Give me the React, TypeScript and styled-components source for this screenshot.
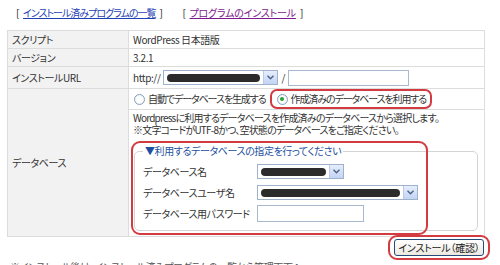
import styled, { createGlobalStyle } from "styled-components";

const GlobalStyle = createGlobalStyle`
  html, body {
    margin: 0;
    padding: 0;
    background: #ffffff;
    overflow: hidden;
  }
  body {
    font-family: "Noto Sans CJK JP", "Liberation Sans", sans-serif;
    font-size: 10px;
    line-height: 12px;
    letter-spacing: -0.4px;
    color: #333333;
    font-feature-settings: "palt";
    white-space: nowrap;
  }
`;

const Page = styled.div`
  width: 500px;
  height: 265px;
  padding-left: 7px;
  box-sizing: border-box;
`;

const TopLinks = styled.div`
  height: 30px;
  padding: 7px 0 0 9px;
  box-sizing: border-box;
  display: flex;
  gap: 20px;
`;

const Bracketed = styled.span`
  color: #222;
`;

const NavLink = styled.a<{ $visited?: boolean }>`
  color: ${(p) => (p.$visited ? "#7a1a8c" : "#1f3fb5")};
  text-decoration: underline;
  letter-spacing: ${(p) => (p.$visited ? "-0.2px" : "-1px")};
  margin: 0 4px;
`;

const Table = styled.table`
  width: 478px;
  border-collapse: collapse;
  border: 1px solid #dcdcdc;
`;

const LabelCell = styled.td`
  width: 116px;
  background: #f2f2f2;
  border: 1px solid #dcdcdc;
  padding: 0 0 0 4px;
  color: #333;
`;

const ValueCell = styled.td<{ $h?: number }>`
  height: ${(p) => p.$h ?? 17}px;
  border: 1px solid #dcdcdc;
  padding: 0 0 0 4px;
  color: #333;
  vertical-align: middle;
`;

const Line = styled.div`
  display: flex;
  align-items: center;
  gap: 3px;
`;

const FakeSelect = styled.div<{ $w: number }>`
  width: ${(p) => p.$w}px;
  height: 13px;
  border: 1px solid #9fb2cc;
  background: #fff;
  display: flex;
  align-items: center;
  padding-left: 3px;
  box-sizing: content-box;
`;

const Blob = styled.span`
  flex: 1;
  height: 8px;
  border-radius: 5px;
  background: #2b2b2b;
  margin-right: 3px;
`;

const ArrowBox = styled.span`
  width: 13px;
  height: 13px;
  background: linear-gradient(#e6eefc, #c2d3f4);
  border-left: 1px solid #b9c9e6;
  display: flex;
  align-items: center;
  justify-content: center;
`;

const TextBox = styled.span<{ $w: number; $h: number }>`
  display: inline-block;
  width: ${(p) => p.$w}px;
  height: ${(p) => p.$h}px;
  border: 1px solid #a9b8cc;
  background: #fff;
`;

const RadioGroup = styled.div`
  display: flex;
  align-items: center;
  height: 20px;
  margin-left: -1px;
  letter-spacing: -1.1px;
`;

const RadioItem = styled.label`
  display: flex;
  align-items: center;
  gap: 3px;
  padding: 0 2px;
`;

const Highlight = styled.span`
  display: inline-flex;
  align-items: center;
  border: 2px solid #d23b40;
  border-radius: 7px;
  height: 16px;
  padding: 0 2px 0 3px;
  margin-left: 2px;
`;

const Radio = styled.span<{ $checked?: boolean }>`
  width: 9px;
  height: 9px;
  border-radius: 50%;
  border: 1px solid #8aa0bd;
  background: radial-gradient(circle, #ffffff 40%, #e4e8ee 100%);
  display: inline-flex;
  align-items: center;
  justify-content: center;
  &::after {
    content: "";
    width: 4px;
    height: 4px;
    border-radius: 50%;
    background: ${(p) => (p.$checked ? "#2aa036" : "transparent")};
  }
`;

const Desc = styled.div`
  padding-top: 2px;
  line-height: 12px;
  letter-spacing: -0.8px;
  color: #333;
`;

const FieldWrap = styled.div`
  position: relative;
  margin: 9px 6px 5px 1px;
`;

const Fieldset = styled.fieldset`
  margin: 0;
  border: 1px solid #d4d4d4;
  border-radius: 5px;
  padding: 4px 0 6px 8px;
`;

const Legend = styled.legend`
  color: #1d4f9e;
  padding: 0 2px;
  margin-left: 0;
`;

const FieldRow = styled.div`
  display: grid;
  grid-template-columns: 114px auto;
  align-items: center;
  height: 21px;
`;

const RedFrame = styled.div`
  position: absolute;
  left: -3px;
  top: -4px;
  width: 293px;
  bottom: -4px;
  border: 2px solid #d23b40;
  border-radius: 9px;
  pointer-events: none;
`;

const ButtonRow = styled.div`
  width: 483px;
  display: flex;
  justify-content: flex-end;
  margin-top: -2px;
`;

const ButtonFrame = styled.span`
  border: 2px solid #d23b40;
  border-radius: 9px;
  padding: 2px 4px;
`;

const Button = styled.button`
  width: 90px;
  height: 17px;
  padding: 0;
  border: 1px solid #274a7a;
  border-radius: 3px;
  background: linear-gradient(#ffffff, #ece9e0);
  font-family: inherit;
  font-size: 10px;
  letter-spacing: -0.2px;
  font-feature-settings: "palt";
  color: #222;
  display: block;
`;

const Footnote = styled.div`
  margin-top: 1px;
  padding-left: 3px;
  color: #555;
`;

const Chevron = () => (
  <svg width="7" height="5" viewBox="0 0 7 5">
    <path d="M0.5 0.8 L3.5 3.8 L6.5 0.8" fill="none" stroke="#4d6185" strokeWidth="1.4" />
  </svg>
);

const Select = ({ w }: { w: number }) => (
  <FakeSelect $w={w}>
    <Blob />
    <ArrowBox>
      <Chevron />
    </ArrowBox>
  </FakeSelect>
);

export default function App() {
  return (
    <Page>
      <GlobalStyle />
      <TopLinks>
        <Bracketed>
          [<NavLink href="#">インストール済みプログラムの一覧</NavLink>]
        </Bracketed>
        <Bracketed>
          [<NavLink href="#" $visited>プログラムのインストール</NavLink>]
        </Bracketed>
      </TopLinks>
      <Table>
        <tbody>
          <tr>
            <LabelCell>スクリプト</LabelCell>
            <ValueCell>WordPress 日本語版</ValueCell>
          </tr>
          <tr>
            <LabelCell>バージョン</LabelCell>
            <ValueCell>3.2.1</ValueCell>
          </tr>
          <tr>
            <LabelCell>インストールURL</LabelCell>
            <ValueCell $h={21}>
              <Line>
                <span>http://</span>
                <Select w={110} />
                <span>/</span>
                <TextBox $w={119} $h={14} />
              </Line>
            </ValueCell>
          </tr>
          <tr>
            <LabelCell rowSpan={2}>データベース</LabelCell>
            <ValueCell $h={20}>
              <RadioGroup>
                <RadioItem>
                  <Radio />
                  自動でデータベースを生成する
                </RadioItem>
                <Highlight>
                  <RadioItem>
                    <Radio $checked />
                    作成済みのデータベースを利用する
                  </RadioItem>
                </Highlight>
              </RadioGroup>
            </ValueCell>
          </tr>
          <tr>
            <ValueCell $h={124}>
              <Desc>
                Wordpressに利用するデータベースを作成済みのデータベースから選択します。
                <br />
                ※文字コードがUTF-8かつ、空状態のデータベースをご指定ください。
              </Desc>
              <FieldWrap>
                <Fieldset>
                  <Legend>▼利用するデータベースの指定を行ってください</Legend>
                  <FieldRow>
                    <span>データベース名</span>
                    <Select w={82} />
                  </FieldRow>
                  <FieldRow>
                    <span>データベースユーザ名</span>
                    <Select w={156} />
                  </FieldRow>
                  <FieldRow>
                    <span>データベース用パスワード</span>
                    <TextBox $w={105} $h={15} />
                  </FieldRow>
                </Fieldset>
                <RedFrame />
              </FieldWrap>
            </ValueCell>
          </tr>
        </tbody>
      </Table>
      <ButtonRow>
        <ButtonFrame>
          <Button>インストール（確認）</Button>
        </ButtonFrame>
      </ButtonRow>
      <Footnote>
        ※インストール後は、インストール済みプログラムの一覧から管理画面へ。
      </Footnote>
    </Page>
  );
}
